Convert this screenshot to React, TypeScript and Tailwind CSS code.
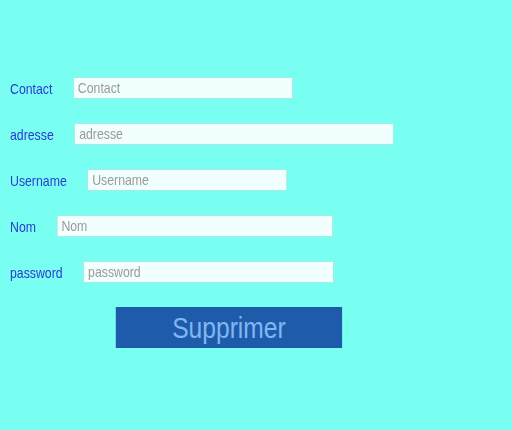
import * as React from "react";

type Field = {
  label: string;
  type: string;
  width: string;
};

// the reference is horizontally condensed, so the form is drawn wide and squeezed
const fields: Field[] = [
  { label: "Contact", type: "text", width: "w-[268px]" },
  { label: "adresse", type: "text", width: "w-[390px]" },
  { label: "Username", type: "text", width: "w-[244px]" },
  { label: "Nom", type: "text", width: "w-[337px]" },
  { label: "password", type: "password", width: "w-[306px]" },
];

export default function App() {
  return (
    <div
      className="min-h-[430px] w-full bg-[#79fff1] pt-[77px] pl-[10px] overflow-hidden"
      style={{ fontFamily: '"Liberation Sans", Arial, sans-serif' }}
    >
      <form
        className="flex flex-col gap-[24px] origin-left scale-x-[0.82] w-[610px]"
        onSubmit={(e) => e.preventDefault()}
      >
        {fields.map((f) => (
          <div key={f.label} className="flex items-center gap-[25px] h-[22px]">
            <label className="text-[15px] text-[#2a3bd0] pt-[2px]">{f.label}</label>
            <input
              type={f.type}
              placeholder={f.label}
              className={`${f.width} h-[22px] rounded-[2px] border border-[#a8e6e6] bg-[#f2ffff] px-[5px] text-[15px] text-gray-700 placeholder:text-[#9a9a9a] outline-none`}
            />
          </div>
        ))}
        <div className="pl-[129px]">
          <button
            type="submit"
            className="w-[276px] h-[41px] bg-[#1f5bab] text-[30px] leading-none text-[#7fb8f0]"
          >
            Supprimer
          </button>
        </div>
      </form>
    </div>
  );
}
